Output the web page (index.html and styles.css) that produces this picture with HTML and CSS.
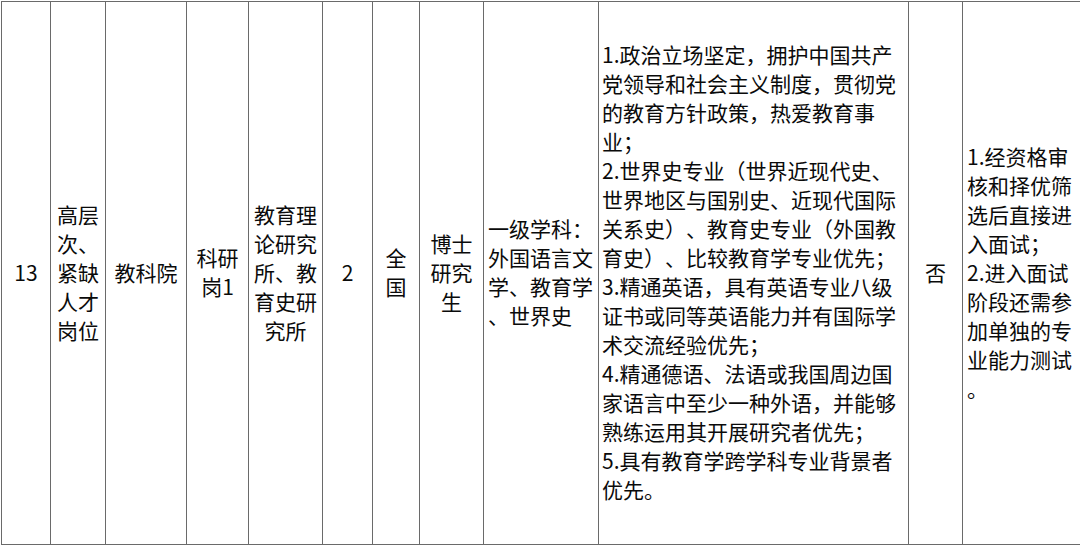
FILE: index.html
```html
<!DOCTYPE html>
<html lang="zh-CN">
<head>
<meta charset="utf-8">
<title>岗位表</title>
<link rel="stylesheet" href="styles.css">
</head>
<body>
<div class="row">
  <div class="cell center"><div>13</div></div>
  <div class="cell left pad6"><div>高层<br>次、<br>紧缺<br>人才<br>岗位</div></div>
  <div class="cell center"><div>教科院</div></div>
  <div class="cell center"><div>科研<br>岗1</div></div>
  <div class="cell center"><div>教育理<br>论研究<br>所、教<br>育史研<br>究所</div></div>
  <div class="cell center"><div>2</div></div>
  <div class="cell center"><div>全<br>国</div></div>
  <div class="cell center"><div>博士<br>研究<br>生</div></div>
  <div class="cell left pad4"><div>一级学科<span class="p">：</span><br>外国语言文<br>学、教育学<br>、世界史</div></div>
  <div class="cell left pad3"><div>1.政治立场坚定<span class="p">，</span>拥护中国共产<br>党领导和社会主义制度<span class="p">，</span>贯彻党<br>的教育方针政策<span class="p">，</span>热爱教育事<br>业<span class="p">；</span><br>2.世界史专业<span class="p">（</span>世界近现代史、<br>世界地区与国别史、近现代国际<br>关系史<span class="p">）</span>、教育史专业<span class="p">（</span>外国教<br>育史<span class="p">）</span>、比较教育学专业优先<span class="p">；</span><br>3.精通英语<span class="p">，</span>具有英语专业八级<br>证书或同等英语能力并有国际学<br>术交流经验优先<span class="p">；</span><br>4.精通德语、法语或我国周边国<br>家语言中至少一种外语<span class="p">，</span>并能够<br>熟练运用其开展研究者优先<span class="p">；</span><br>5.具有教育学跨学科专业背景者<br>优先。</div></div>
  <div class="cell center"><div>否</div></div>
  <div class="cell left pad4"><div>1.经资格审<br>核和择优筛<br>选后直接进<br>入面试<span class="p">；</span><br>2.进入面试<br>阶段还需参<br>加单独的专<br>业能力测试<br>。</div></div>
</div>
</body>
</html>
```

FILE: styles.css
```css
html, body {
  margin: 0;
  padding: 0;
  background: #ffffff;
  overflow: hidden;
}

body {
  width: 1080px;
  height: 546px;
  font-family: "Noto Sans CJK SC", "Noto Sans", sans-serif;
  font-size: 21px;
  line-height: 29px;
  color: #0a0a0a;
  text-spacing-trim: space-all;
}

.row {
  margin: 1px 0 0 1px;
  height: 544px;
  box-sizing: border-box;
  border-top: 1px solid #6a6a6a;
  border-bottom: 1px solid #6a6a6a;
  display: grid;
  grid-template-columns: 49px 55px 81px 62px 74px 50px 47px 64px 115px 310px 54px 1fr;
}

.cell {
  border-left: 1px solid #6a6a6a;
  display: flex;
  align-items: center;
  white-space: nowrap;
  overflow: hidden;
  padding-bottom: 2px;
}

.center {
  justify-content: center;
  text-align: center;
}

.left {
  justify-content: flex-start;
  text-align: left;
}

.pad6 { padding-left: 6px; }
.pad4 { padding-left: 4px; }
.pad3 { padding-left: 3px; }

.p {
  font-family: "Noto Sans CJK TC", "Noto Sans CJK SC", sans-serif;
}
```
